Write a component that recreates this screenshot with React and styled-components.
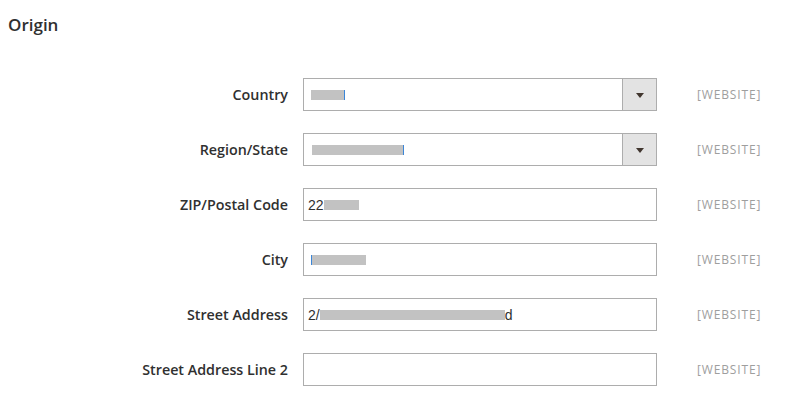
import React from 'react'
import styled, { createGlobalStyle } from 'styled-components'

const GlobalStyle = createGlobalStyle`
	html, body {
		margin: 0;
		padding: 0;
		background: #ffffff;
	}
	body {
		font-family: "Open Sans", "Liberation Sans", sans-serif;
		color: #303030;
	}
`

const Page = styled.div`
	width: 810px;
	height: 401px;
	padding: 0 0 0 8px;
	box-sizing: border-box;
	overflow: hidden;
`

const Title = styled.h3`
	margin: 0;
	padding-top: 14px;
	height: 78px;
	box-sizing: border-box;
	font-size: 17px;
	font-weight: 600;
	line-height: 22px;
	color: #303030;
`

const Fieldset = styled.div`
	display: grid;
	grid-template-columns: 280px 354px 1fr;
	column-gap: 15px;
	row-gap: 22px;
	align-items: center;
`

const Label = styled.label`
	text-align: right;
	font-size: 14.3px;
	font-weight: 600;
	color: #303030;
	line-height: 33px;
`

const Scope = styled.span`
	padding-left: 25px;
	font-size: 12px;
	font-weight: 400;
	color: #9e9e9e;
	letter-spacing: 0.85px;
`

const Field = styled.div`
	display: flex;
	align-items: stretch;
	height: 33px;
	box-sizing: border-box;
	border: 1px solid #adadad;
	background: #ffffff;
`

const Value = styled.div`
	flex: 1;
	display: flex;
	align-items: center;
	padding-left: 4px;
	font-family: "Liberation Sans", Arial, sans-serif;
	font-size: 14px;
	color: #303030;
`

const Mask = styled.span`
	display: inline-block;
	width: ${p => p.w}px;
	height: 10px;
	margin-left: ${p => p.offset || 0}px;
	background: #c2c2c2;
	border-right: ${p => (p.tail ? '1px solid #3b86d8' : 'none')};
	border-left: ${p => (p.lead ? '1px solid #3b86d8' : 'none')};
`

const SelectButton = styled.div`
	width: 33px;
	border-left: 1px solid #adadad;
	background: #e3e3e3;
	display: flex;
	align-items: center;
	justify-content: center;
`

const Arrow = styled.span`
	width: 0;
	height: 0;
	margin-top: 1px;
	border-left: 4px solid transparent;
	border-right: 4px solid transparent;
	border-top: 5px solid #41362f;
`

const rows = [
	{ label: 'Country', select: true, value: <Mask w={33} offset={3} tail /> },
	{ label: 'Region/State', select: true, value: <Mask w={91} offset={4} tail /> },
	{ label: 'ZIP/Postal Code', value: <>22<Mask w={35} /></> },
	{ label: 'City', value: <Mask w={54} offset={3} lead /> },
	{ label: 'Street Address', value: <>2/<Mask w={185} />d</> },
	{ label: 'Street Address Line 2', value: null },
]

const App = () => (
	<Page>
		<GlobalStyle />
		<Title>Origin</Title>
		<Fieldset>
			{rows.map(row => (
				<React.Fragment key={row.label}>
					<Label>{row.label}</Label>
					<Field>
						<Value>{row.value}</Value>
						{row.select && (
							<SelectButton>
								<Arrow />
							</SelectButton>
						)}
					</Field>
					<Scope>[WEBSITE]</Scope>
				</React.Fragment>
			))}
		</Fieldset>
	</Page>
)

export default App
